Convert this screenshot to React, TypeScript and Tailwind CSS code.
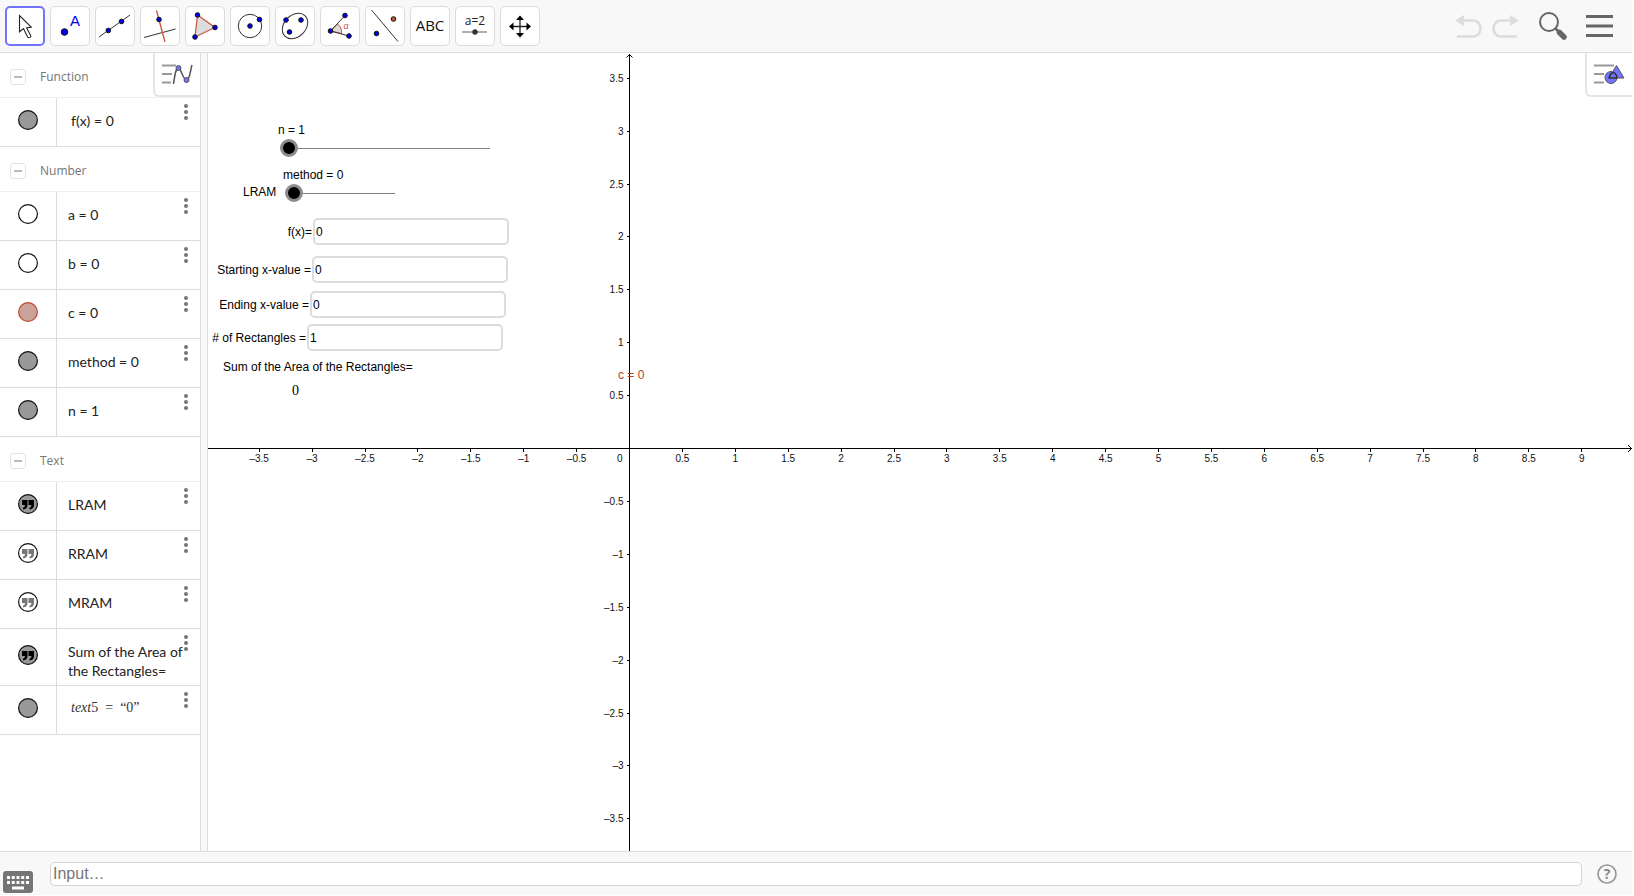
import type { ReactNode } from "react";

const UNIT = 52.9;
const ORIGIN_X = 421.5;
const ORIGIN_Y = 395.5;

const BLUE = "#0000ee";
const BROWN = "#c8553a";

type Tool = { name: string; icon: ReactNode };

function Dot({ x, y, fill = BLUE }: { x: number; y: number; fill?: string }) {
  return <circle cx={x} cy={y} r="2.3" fill={fill} stroke="#111" strokeWidth="1" />;
}

const TOOLS: Tool[] = [
  {
    name: "Move",
    icon: (
      <path
        d="M14.5 9.5v16.300l4-3.200 4 8.200q1 1.600 2.600.600 1.200-.800.600-2l-4.100-7.500 4.700-.800z"
        fill="#fff"
        stroke="#222"
        strokeWidth="1.1"
      />
    ),
  },
  {
    name: "Point",
    icon: (
      <>
        <circle cx="14.5" cy="26" r="3.3" fill={BLUE} stroke="#111" />
        <text x="20" y="20" fontSize="15" fill={BLUE} className="font-['Liberation_Sans']">
          A
        </text>
      </>
    ),
  },
  {
    name: "Line",
    icon: (
      <>
        <path d="M4 31 35 9" stroke="#333" />
        <Dot x={13.3} y={24.5} />
        <Dot x={26.5} y={15.5} />
      </>
    ),
  },
  {
    name: "Perpendicular line",
    icon: (
      <>
        <path d="M4 31.5 35.500 23" stroke="#333" />
        <path d="M16.500 4.500 25 36" stroke={BROWN} strokeWidth="1.3" />
        <Dot x={19} y={13.5} />
      </>
    ),
  },
  {
    name: "Polygon",
    icon: (
      <>
        <path d="M12.500 9 30 21.500 10 31z" fill="#ddd" stroke={BROWN} strokeWidth="1.2" />
        <Dot x={12.5} y={9} />
        <Dot x={30} y={21.5} />
        <Dot x={10} y={31} />
      </>
    ),
  },
  {
    name: "Circle",
    icon: (
      <>
        <circle cx="20" cy="20" r="11.7" stroke="#333" />
        <Dot x={20} y={20} />
        <Dot x={29.5} y={13.5} />
      </>
    ),
  },
  {
    name: "Ellipse",
    icon: (
      <>
        <ellipse cx="20" cy="20" rx="14.3" ry="10.8" transform="rotate(-45 20 20)" stroke="#333" />
        <Dot x={11} y={14} />
        <Dot x={26} y={14} />
        <Dot x={14.5} y={26} />
      </>
    ),
  },
  {
    name: "Angle",
    icon: (
      <>
        <path d="M10.500 25 17.500 18q4.500 3 4 9.500z" fill="#ddd" stroke={BROWN} />
        <path d="M10.500 25 25 9.500M10.500 25l18.500 5" stroke="#333" />
        <Dot x={10.5} y={25} />
        <Dot x={25} y={9.5} />
        <Dot x={29} y={30} />
        <text x="23.5" y="23" fontSize="9" fill={BROWN} className="font-['Liberation_Sans']">
          α
        </text>
      </>
    ),
  },
  {
    name: "Reflect about line",
    icon: (
      <>
        <path d="M6.500 4 33 35.500" stroke="#333" />
        <Dot x={28.5} y={13} fill={BROWN} />
        <Dot x={11.5} y={27.5} />
      </>
    ),
  },
  {
    name: "Text",
    icon: (
      <text x="20" y="25" textAnchor="middle" fontSize="15" fill="#111" className="font-['Open_Sans']">
        ABC
      </text>
    ),
  },
  {
    name: "Slider",
    icon: (
      <>
        <text x="20" y="19" textAnchor="middle" fontSize="12" fill="#222" className="font-['Open_Sans']">
          a=2
        </text>
        <path d="M7 26h25" stroke="#8a8080" strokeWidth="1.3" />
        <circle cx="20" cy="26" r="2.7" fill="#333" />
      </>
    ),
  },
  {
    name: "Move graphics view",
    icon: (
      <>
        <path d="M13 20.500h14M20 13v15" stroke="#222" strokeWidth="1.3" />
        <path d="M20 9.500l4 4.500h-8zM20 31.500l4-4.500h-8zM9 20.500l4.500-4v8zM31 20.500l-4.500-4v8z" fill="#000" />
      </>
    ),
  },
];

type Marker = "hidden" | "shown" | "red" | "quote" | "quoteHidden";

type Item = { label: string; marker: Marker; look?: "indent" | "serif" };

const GROUPS: { title: string; items: Item[] }[] = [
  { title: "Function", items: [{ label: "f(x) = 0", marker: "shown", look: "indent" }] },
  {
    title: "Number",
    items: [
      { label: "a = 0", marker: "hidden" },
      { label: "b = 0", marker: "hidden" },
      { label: "c = 0", marker: "red" },
      { label: "method = 0", marker: "shown" },
      { label: "n = 1", marker: "shown" },
    ],
  },
  {
    title: "Text",
    items: [
      { label: "LRAM", marker: "quote" },
      { label: "RRAM", marker: "quoteHidden" },
      { label: "MRAM", marker: "quoteHidden" },
      { label: "Sum of the Area of the Rectangles=", marker: "quote" },
      { label: "text5", marker: "shown", look: "serif" },
    ],
  },
];

const MARKER_FILL: Record<Marker, string> = {
  hidden: "#fff",
  shown: "#999",
  red: "#c9a29b",
  quote: "#999",
  quoteHidden: "#fff",
};

function MarkerIcon({ marker }: { marker: Marker }) {
  const isQuote = marker === "quote" || marker === "quoteHidden";
  return (
    <svg viewBox="0 0 20 20" className="size-5" fill="none" aria-hidden>
      <circle
        cx="10"
        cy="10"
        r="9.4"
        fill={MARKER_FILL[marker]}
        stroke={marker === "red" ? "#c04a30" : "#111"}
        strokeWidth="1.2"
      />
      {isQuote && (
        <path
          d="M4 6h5.500v5q0 4-4.500 4.500v-1.700q2-.500 2-2.800H4zM10.500 6H16v5q0 4-4.500 4.500v-1.700q2-.500 2-2.800h-3z"
          fill={marker === "quote" ? "#000" : "#777"}
        />
      )}
    </svg>
  );
}

function AlgebraRow({ label, marker, look }: Item) {
  return (
    <li className="relative flex min-h-[49px] border-b border-[#dcdcdc]">
      <div className="flex w-[57px] shrink-0 items-center justify-center border-r border-[#dcdcdc] pb-1">
        <button type="button" aria-label={`Show or hide ${label}`}>
          <MarkerIcon marker={marker} />
        </button>
      </div>
      {look === "serif" ? (
        <p className="flex-1 pt-3 pl-3.5 font-['Liberation_Serif',serif] text-[14px] leading-[19px] whitespace-pre text-[#333]">
          <i>text</i>5 {" = "} “0”
        </p>
      ) : (
        <p
          className={`flex-1 pt-[13px] pr-3 pb-[5px] font-['Lato',sans-serif] text-[14px] leading-[19px] text-[#222] ${
            look === "indent" ? "pl-3.5" : "pl-[11px]"
          }`}
        >
          {label}
        </p>
      )}
      <button type="button" aria-label={`Options for ${label}`} className="absolute top-0 right-3 h-7 w-1">
        <svg viewBox="0 0 4 28" className="h-7 w-1" fill="#757575" aria-hidden>
          <circle cx="2" cy="8" r="2" />
          <circle cx="2" cy="14" r="2" />
          <circle cx="2" cy="20" r="2" />
        </svg>
      </button>
    </li>
  );
}

function AlgebraView() {
  return (
    <aside className="relative w-[201px] shrink-0 border-r border-[#dcdcdc] bg-white">
      {GROUPS.map((group) => (
        <section key={group.title}>
          <h2 className="flex h-[45px] items-center border-b border-[#eee] pt-1 pl-2.5 font-['Open_Sans',sans-serif] text-[12px] text-[#757575]">
            <button
              type="button"
              aria-label={`Collapse ${group.title}`}
              className="mr-3.5 flex size-4 items-center justify-center rounded-[3px] border border-[#e4e4e4]"
            >
              <span className="h-0.5 w-2 bg-[#bbb]" />
            </button>
            {group.title}
          </h2>
          <ul>
            {group.items.map((item) => (
              <AlgebraRow key={item.label} {...item} />
            ))}
          </ul>
        </section>
      ))}
      <button
        type="button"
        aria-label="Algebra style bar"
        className="absolute top-0 right-0 h-11 w-[47px] rounded-bl-md border-b-2 border-l-2 border-[#e4e4e4] bg-white"
      >
        <svg viewBox="0 0 45 42" className="h-[42px] w-[45px]" fill="none" aria-hidden>
          <path d="M7 12.500h14M7 21h10M7 29.500h9" stroke="#999" strokeWidth="2" />
          <path d="M18.500 31C20 20 21 15 23.500 15S28 27 31.500 27 35 18 37 12" stroke="#555" strokeWidth="1.5" />
          <circle cx="23.5" cy="15" r="2.5" fill="#7373ff" stroke="#555" />
          <circle cx="31.5" cy="27" r="2.5" fill="#7373ff" stroke="#555" />
        </svg>
      </button>
    </aside>
  );
}

function range(from: number, to: number) {
  return Array.from({ length: to - from + 1 }, (_, i) => from + i).filter((k) => k !== 0);
}

function tickLabel(k: number) {
  return `${k < 0 ? "–" : ""}${Math.abs(k) / 2}`;
}

function Axes() {
  return (
    <svg className="absolute inset-0 h-full w-full font-['Liberation_Sans',sans-serif] text-[10px]" aria-hidden>
      <g stroke="#000" shapeRendering="crispEdges">
        <line x1="0" x2="100%" y1={ORIGIN_Y} y2={ORIGIN_Y} />
        <line x1={ORIGIN_X} x2={ORIGIN_X} y1="1" y2="100%" />
        {range(-7, 18).map((k) => {
          const x = ORIGIN_X + k * UNIT;
          return <line key={k} x1={x} x2={x} y1={ORIGIN_Y} y2={ORIGIN_Y + 3} />;
        })}
        {range(-7, 7).map((k) => {
          const y = ORIGIN_Y - k * UNIT;
          return <line key={k} x1={ORIGIN_X - 3} x2={ORIGIN_X} y1={y} y2={y} />;
        })}
      </g>
      <path d="M418.500 4.500l3-3 3 3" fill="none" stroke="#000" />
      <svg x="100%" y={ORIGIN_Y} overflow="visible">
        <path d="M-4-3.500-.500 0-4 3.500" fill="none" stroke="#000" />
      </svg>
      <g fill="#111">
        {range(-7, 18).map((k) => (
          <text key={k} x={ORIGIN_X + k * UNIT} y={ORIGIN_Y + 13.5} textAnchor="middle">
            {tickLabel(k)}
          </text>
        ))}
        {range(-7, 7).map((k) => (
          <text key={k} x={ORIGIN_X - 6} y={ORIGIN_Y - k * UNIT + 3.5} textAnchor="end">
            {tickLabel(k)}
          </text>
        ))}
        <text x={ORIGIN_X - 7} y={ORIGIN_Y + 13.5} textAnchor="end">
          0
        </text>
      </g>
    </svg>
  );
}

const SLIDER =
  "absolute h-[18px] cursor-pointer appearance-none bg-transparent [&::-webkit-slider-runnable-track]:h-px [&::-webkit-slider-runnable-track]:bg-[#808080] [&::-webkit-slider-thumb]:-mt-[9px] [&::-webkit-slider-thumb]:size-[18px] [&::-webkit-slider-thumb]:appearance-none [&::-webkit-slider-thumb]:rounded-full [&::-webkit-slider-thumb]:border-3 [&::-webkit-slider-thumb]:border-[#8c8c8c] [&::-webkit-slider-thumb]:bg-black";

const FIELDS = [
  { id: "fx", label: "f(x)=", value: "0", place: "top-[165px] right-[calc(100%-301px)]" },
  { id: "start", label: "Starting x-value =", value: "0", place: "top-[203px] right-[calc(100%-300px)]" },
  { id: "end", label: "Ending x-value =", value: "0", place: "top-[238px] right-[calc(100%-298px)]" },
  { id: "count", label: "# of Rectangles =", value: "1", place: "top-[271px] right-[calc(100%-295px)]" },
];

function GraphicsView() {
  return (
    <main className="relative min-w-0 flex-1 overflow-hidden bg-white font-['Liberation_Sans',sans-serif] text-[12px] leading-4 text-black">
      <Axes />

      <label htmlFor="n" className="absolute top-[69px] left-[70px]">
        n = 1
      </label>
      <input id="n" type="range" min={1} max={100} defaultValue={1} className={`${SLIDER} top-[86px] left-[72px] w-[210px]`} />

      <label htmlFor="method" className="absolute top-[114px] left-[75px]">
        method = 0
      </label>
      <input id="method" type="range" min={0} max={2} defaultValue={0} className={`${SLIDER} top-[131px] left-[77px] w-[110px]`} />
      <p className="absolute top-[131px] left-[35px]">LRAM</p>

      {FIELDS.map((field) => (
        <div key={field.id} className={`absolute flex items-center gap-px whitespace-nowrap ${field.place}`}>
          <label htmlFor={field.id}>{field.label}</label>
          <input
            id={field.id}
            type="text"
            defaultValue={field.value}
            className="h-[27px] w-[196px] rounded-[5px] border-2 border-[#dcdcdc] bg-white pl-px"
          />
        </div>
      ))}

      <p className="absolute top-[306px] left-[15px]">Sum of the Area of the Rectangles=</p>
      <p className="absolute top-[330px] left-[84px] font-['Liberation_Serif',serif] text-[14px] leading-4">0</p>
      <p className="absolute top-[314px] left-[410px] text-[#b8401f]">c = 0</p>

      <button
        type="button"
        aria-label="Graphics style bar"
        className="absolute top-0 right-0 h-11 w-[47px] rounded-bl-md border-b-2 border-l-2 border-[#e4e4e4] bg-white"
      >
        <svg viewBox="0 0 45 42" className="h-[42px] w-[45px]" fill="none" aria-hidden>
          <path d="M7 12.500h20M7 21h10M7 29.500h10" stroke="#999" strokeWidth="2" />
          <circle cx="24" cy="24.5" r="6" fill="#7373ff" stroke="#555" />
          <path d="M29.500 12.500 37 25H22z" fill="#7373ff" stroke="#555" />
          <path d="M22 25q1-5 4.500-5.500 3 1 3.500 5.500z" stroke="#222" strokeWidth="1.2" />
        </svg>
      </button>
    </main>
  );
}

function Toolbar() {
  return (
    <header className="flex h-[53px] shrink-0 items-center justify-between border-b border-[#dcdcdc] bg-[#f8f8f8]">
      <div className="flex gap-[5px] pl-[5px]">
        {TOOLS.map((tool, i) => (
          <button
            key={tool.name}
            type="button"
            aria-label={tool.name}
            className={`flex size-10 items-center justify-center rounded-[5px] bg-white ${
              i === 0 ? "border-2 border-[#7373ff]" : "border border-[#dcdcdc]"
            }`}
          >
            <svg viewBox="0 0 40 40" className="size-10 shrink-0" fill="none" aria-hidden>
              {tool.icon}
            </svg>
          </button>
        ))}
      </div>
      <div className="flex items-center pr-[19px]">
        <button type="button" aria-label="Undo" className="mr-2">
          <svg viewBox="0 0 28 26" className="h-[26px] w-7" fill="none" aria-hidden>
            <path d="M7 7.500h11.500a7 8 0 0 1 0 16H2" stroke="#dcdcdc" strokeWidth="2.7" />
            <path d="M0 7.500 9 2v11z" fill="#dcdcdc" />
          </svg>
        </button>
        <button type="button" aria-label="Redo" className="mr-5">
          <svg viewBox="0 0 28 26" className="h-[26px] w-7" fill="none" aria-hidden>
            <path d="M21 7.500H9.500a7 8 0 0 0 0 16H26" stroke="#dcdcdc" strokeWidth="2.7" />
            <path d="M28 7.500 19 2v11z" fill="#dcdcdc" />
          </svg>
        </button>
        <button type="button" aria-label="Search" className="mr-[19px]">
          <svg viewBox="0 0 28 28" className="size-7" fill="none" stroke="#666" aria-hidden>
            <circle cx="10" cy="10" r="9" strokeWidth="2" />
            <path d="M16.500 16.500 20 20" strokeWidth="2.5" />
            <path d="M20.500 20.500 25 25" strokeWidth="5.5" strokeLinecap="round" />
          </svg>
        </button>
        <button type="button" aria-label="Menu">
          <svg viewBox="0 0 27 24" className="h-6 w-[27px]" stroke="#666" strokeWidth="3" aria-hidden>
            <path d="M0 2.500h27M0 12h27M0 21.500h27" />
          </svg>
        </button>
      </div>
    </header>
  );
}

function InputBar() {
  return (
    <footer className="flex h-11 shrink-0 items-center border-t border-[#dcdcdc] bg-[#f8f8f8] pr-[15px] pl-[3px]">
      <button type="button" aria-label="Keyboard" className="mr-[17px] self-end pb-0.5">
        <svg viewBox="0 0 30 22" className="h-[22px] w-[30px]" aria-hidden>
          <rect width="30" height="22" rx="3" fill="#757575" />
          <path d="M4 6.500h22M4 11.500h22" stroke="#fff" strokeWidth="3" strokeDasharray="3 1.75" />
          <path d="M9 17h12" stroke="#fff" strokeWidth="3" />
        </svg>
      </button>
      <input
        type="text"
        aria-label="Input"
        placeholder="Input…"
        className="h-6 min-w-0 flex-1 rounded-[5px] border border-[#d4d4d4] bg-white pl-0.5 font-['Liberation_Sans',sans-serif] text-[16px] placeholder:text-[#757575]"
      />
      <button type="button" aria-label="Help" className="ml-[15px]">
        <svg viewBox="0 0 20 20" className="size-5" aria-hidden>
          <circle cx="10" cy="10" r="9" fill="none" stroke="#999" strokeWidth="1.7" />
          <text
            x="10"
            y="15"
            textAnchor="middle"
            fontSize="14"
            fontWeight="700"
            fill="#888"
            className="font-['Open_Sans']"
          >
            ?
          </text>
        </svg>
      </button>
    </footer>
  );
}

export default function App() {
  return (
    <div className="flex h-screen flex-col bg-white pr-0.5 pb-px">
      <Toolbar />
      <div className="flex min-h-0 flex-1">
        <AlgebraView />
        <div className="w-[7px] shrink-0 border-r border-[#dcdcdc] bg-[#f8f8f8]" />
        <GraphicsView />
      </div>
      <InputBar />
    </div>
  );
}
